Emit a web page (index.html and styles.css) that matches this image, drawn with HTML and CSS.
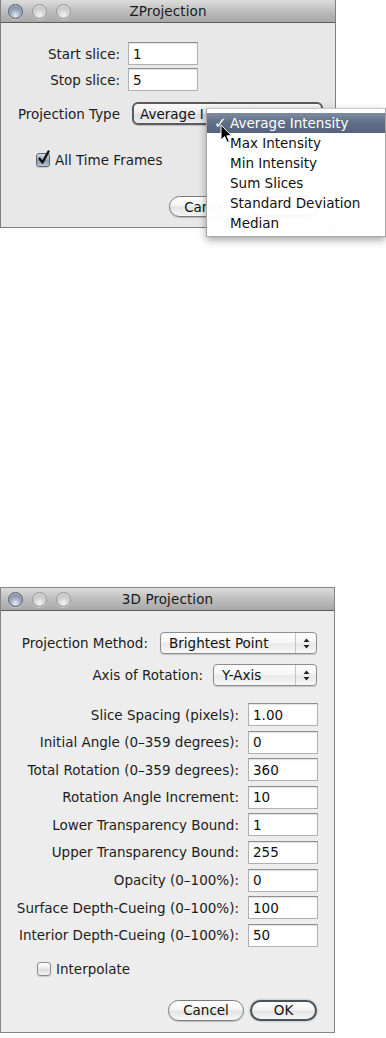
FILE: index.html
```html
<!DOCTYPE html>
<html>
<head>
<meta charset="utf-8">
<title>Projection dialogs</title>
<link rel="stylesheet" href="styles.css">
</head>
<body>
<div class="page">
  <div class="win win-z">
    <div class="titlebar">
      <div class="lights"><span class="light close"></span><span class="light"></span><span class="light"></span></div>
      <div class="title">ZProjection</div>
      <div></div>
    </div>
    <div class="zbody">
      <div class="zrow"><span class="lbl">Start slice:</span><div class="field">1</div></div>
      <div class="zrow zrow2"><span class="lbl">Stop slice:</span><div class="field">5</div></div>
      <div class="zrow zrow3"><span class="lbl">Projection Type</span><div class="popup popup-open"><span class="otext">Average I</span></div></div>
      <div class="check-row z-check">
        <span class="checkbox checked"><svg class="tick" width="14" height="16" viewBox="0 0 14 16"><path d="M2.5 8.5 L5.5 12.5 L11.5 1.5" fill="none" stroke="#111" stroke-width="2.4" stroke-linejoin="round" stroke-linecap="round"/></svg></span>
        <span>All Time Frames</span>
      </div>
      <div class="buttons z-buttons"><div class="btn btn-cancel">Cancel</div><div class="btn btn-ok"></div></div>
    </div>
    <div class="menu">
      <div class="mitem sel"><span class="chk">✓</span>Average Intensity</div>
      <div class="mitem"><span class="chk"></span>Max Intensity</div>
      <div class="mitem"><span class="chk"></span>Min Intensity</div>
      <div class="mitem"><span class="chk"></span>Sum Slices</div>
      <div class="mitem"><span class="chk"></span>Standard Deviation</div>
      <div class="mitem"><span class="chk"></span>Median</div>
    </div>
    <svg class="cursor" width="13" height="20" viewBox="0 0 13 20"><path d="M1 1 L1 16 L4.6 12.6 L7.2 18.4 L9.4 17.4 L6.9 11.8 L11.6 11.8 Z" fill="#000" stroke="#fff" stroke-width="1" stroke-linejoin="round"/></svg>
  </div>

  <div class="win win-3d">
    <div class="titlebar">
      <div class="lights"><span class="light close"></span><span class="light"></span><span class="light"></span></div>
      <div class="title">3D Projection</div>
      <div></div>
    </div>
    <div class="dbody">
      <div class="prow prow1"><span class="lbl">Projection Method:</span><div class="popup popup-method"><span class="ptext">Brightest Point</span><span class="arrows"><svg width="7" height="11" viewBox="0 0 7 11"><path d="M3.5 0.5 L6.5 4 L0.5 4 Z M3.5 10.5 L6.5 7 L0.5 7 Z" fill="#222"/></svg></span></div></div>
      <div class="prow prow2"><span class="lbl">Axis of Rotation:</span><div class="popup popup-axis"><span class="ptext">Y-Axis</span><span class="arrows"><svg width="7" height="11" viewBox="0 0 7 11"><path d="M3.5 0.5 L6.5 4 L0.5 4 Z M3.5 10.5 L6.5 7 L0.5 7 Z" fill="#222"/></svg></span></div></div>
      <div class="fields">
        <div class="frow"><span class="lbl">Slice Spacing (pixels):</span><div class="field">1.00</div></div>
        <div class="frow"><span class="lbl">Initial Angle (0–359 degrees):</span><div class="field">0</div></div>
        <div class="frow"><span class="lbl">Total Rotation (0–359 degrees):</span><div class="field">360</div></div>
        <div class="frow"><span class="lbl">Rotation Angle Increment:</span><div class="field">10</div></div>
        <div class="frow"><span class="lbl">Lower Transparency Bound:</span><div class="field">1</div></div>
        <div class="frow"><span class="lbl">Upper Transparency Bound:</span><div class="field">255</div></div>
        <div class="frow"><span class="lbl">Opacity (0–100%):</span><div class="field">0</div></div>
        <div class="frow"><span class="lbl">Surface Depth-Cueing (0–100%):</span><div class="field">100</div></div>
        <div class="frow"><span class="lbl">Interior Depth-Cueing (0–100%):</span><div class="field">50</div></div>
      </div>
      <div class="check-row d-check">
        <span class="checkbox"></span>
        <span>Interpolate</span>
      </div>
      <div class="buttons d-buttons"><div class="btn btn-cancel">Cancel</div><div class="btn btn-ok">OK</div></div>
    </div>
  </div>
</div>
</body>
</html>
```
FILE: styles.css
```css
* { box-sizing: border-box; }
html, body { margin: 0; padding: 0; background: #fff; }
body {
  font-family: "DejaVu Sans", "Lucida Grande", sans-serif;
  font-size: 13.5px;
  color: #1c1c1c;
  width: 386px;
  height: 1038px;
  overflow: hidden;
}
.page { display: flex; flex-direction: column; align-items: flex-start; }

.win {
  position: relative;
  background: #e8e8e8;
  border: 1px solid #7f7f7f;
}
.win-z { width: 336px; border-top: none; }
.win-3d { width: 335px; margin-top: 359px; background: #ededed; border-color: #858585; }

.titlebar {
  height: 23px;
  display: grid;
  grid-template-columns: 1fr auto 1fr;
  align-items: center;
  background: linear-gradient(#dcdcdc, #b9b9b9 60%, #a8a8a8);
  border-bottom: 1px solid #5c5c5c;
}
.lights { display: flex; gap: 9px; padding-left: 7px; }
.light {
  width: 15px; height: 15px; border-radius: 50%;
  border: 1px solid #979797;
  background: radial-gradient(circle at 50% 78%, #f2f2f2 0%, #d2d2d2 45%, #b4b4b4 100%);
  box-shadow: inset 0 1px 1px rgba(255,255,255,.6), 0 1px 0 rgba(255,255,255,.4);
}
.light.close {
  border-color: #56606d;
  background: radial-gradient(circle at 50% 80%, #e6ecf4 0%, #a4b1c3 40%, #6c7a8e 85%, #56637a 100%);
}
.title { color: #1a1a1a; letter-spacing: 0.1px; }

.lbl { white-space: nowrap; }

.field {
  height: 23px; width: 70px;
  background: #fff;
  border: 1px solid #b0b0b0;
  border-top-color: #8f8f8f;
  box-shadow: inset 0 1px 1px rgba(0,0,0,.12);
  padding-left: 4px;
  display: flex; align-items: center;
  color: #111;
}

/* ZProjection */
.zbody { padding: 19px 0 10px; }
.zrow { display: flex; align-items: center; gap: 8px; height: 23px; }
.zrow .lbl { width: 119px; text-align: right; }
.zrow2 { margin-top: 3px; }
.zrow3 { margin-top: 11px; }

.popup {
  height: 22px;
  display: flex; align-items: center;
  border: 1px solid #8e8e8e;
  border-radius: 4px;
  background: linear-gradient(#ffffff, #f6f6f6 45%, #e9e9e9 55%, #f7f7f7);
  box-shadow: 0 1px 1px rgba(0,0,0,.18);
  color: #111;
}
.popup-open {
  margin-left: 4px;
  width: 191px; height: 23px;
  border: 2px solid #585b60;
  border-radius: 6px;
  padding-left: 6px;
  background: linear-gradient(#fbfbfb, #ececec 50%, #dedede 55%, #ececec);
  white-space: nowrap; overflow: hidden;
}
.otext { white-space: nowrap; }

.check-row { display: flex; align-items: center; gap: 5px; height: 16px; }
.z-check { margin-top: 27px; padding-left: 35px; }
.checkbox {
  position: relative;
  width: 14px; height: 14px;
  border: 1px solid #8b8b8b;
  border-radius: 3px;
  background: linear-gradient(#ffffff, #ececec 45%, #dcdcdc 55%, #f3f3f3);
  box-shadow: 0 1px 1px rgba(0,0,0,.15);
}
.checkbox.checked {
  border-color: #5e6772;
  background: linear-gradient(#d5dbe4, #a6b1c0 45%, #8f9cae 55%, #b9c2cf);
}
.tick { position: absolute; left: 0; top: -4px; }

.buttons { display: flex; justify-content: flex-end; gap: 6px; padding-right: 17px; }
.z-buttons { margin-top: 28px; }
.btn {
  height: 21px;
  display: flex; align-items: center; justify-content: center;
  border: 1px solid #7c7c7c;
  border-radius: 11px;
  background: linear-gradient(#ffffff, #f4f4f4 45%, #e4e4e4 55%, #f6f6f6);
  box-shadow: 0 1px 1px rgba(0,0,0,.2);
  color: #111;
}
.btn-cancel { width: 76px; }
.btn-ok { width: 67px; border: 2px solid #4a525c; box-shadow: 0 0 2px rgba(60,70,90,.6); }

/* menu overlay */
.menu {
  position: absolute;
  left: 205px; top: 108px;
  width: 180px; height: 129px;
  background: rgba(255,255,255,.97);
  border: 1px solid #a6a6a6;
  border-top-color: #c9c9c9;
  box-shadow: 0 3px 8px rgba(0,0,0,.35);
  padding: 4px 0 3px;
}
.mitem { height: 20px; display: flex; align-items: center; padding-left: 7px; white-space: nowrap; color: #111; }
.mitem .chk { width: 16px; display: inline-block; font-size: 15px; font-weight: bold; }
.mitem.sel {
  color: #fff;
  background: linear-gradient(#7d8ca2, #5f6e86 50%, #55647c);
}
.cursor { position: absolute; left: 219px; top: 124px; }

/* 3D Projection */
.dbody { padding: 21px 0 11px; }
.prow { display: flex; justify-content: flex-end; align-items: center; padding-right: 17px; }
.prow1 { gap: 12px; }
.prow2 { gap: 10px; margin-top: 10px; }
.popup-method { width: 157px; }
.popup-axis { width: 104px; }
.ptext { flex: 1; padding-left: 8px; white-space: nowrap; }
.arrows {
  width: 21px; height: 100%;
  display: flex; align-items: center; justify-content: center;
  border-left: 1px solid #c4c4c4;
}
.fields { margin-top: 17px; display: flex; flex-direction: column; gap: 4.6px; }
.frow { display: flex; justify-content: flex-end; align-items: center; gap: 9px; padding-right: 16px; height: 23px; }
.d-check { margin-top: 14px; padding-left: 36px; }
.d-buttons { margin-top: 23px; }
```
